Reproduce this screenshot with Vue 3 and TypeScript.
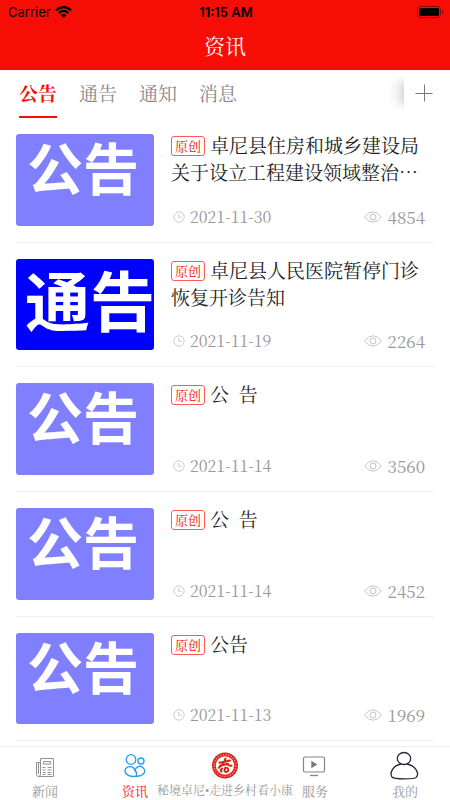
<script setup lang="ts">
import { ref } from 'vue'

interface Article {
  id: number
  cover: string
  kind: 'light' | 'deep'
  title: string
  date: string
  views: number
}

const tabs: string[] = ['公告', '通告', '通知', '消息']
const activeTab = ref('公告')

const articles: Article[] = [
  { id: 1, cover: '公告', kind: 'light', title: '卓尼县住房和城乡建设局关于设立工程建设领域整治⋯', date: '2021-11-30', views: 4854 },
  { id: 2, cover: '通告', kind: 'deep', title: '卓尼县人民医院暂停门诊恢复开诊告知', date: '2021-11-19', views: 2264 },
  { id: 3, cover: '公告', kind: 'light', title: '公\u00a0\u00a0告', date: '2021-11-14', views: 3560 },
  { id: 4, cover: '公告', kind: 'light', title: '公\u00a0\u00a0告', date: '2021-11-14', views: 2452 },
  { id: 5, cover: '公告', kind: 'light', title: '公告', date: '2021-11-13', views: 1969 },
]
</script>

<template>
  <div class="app">
    <header class="header">
      <div class="status">
        <div class="carrier">
          <span>Carrier</span>
          <svg width="17" height="12" viewBox="0 0 17 12" fill="none" stroke="#000" stroke-width="2.2">
            <path d="M1 4.3Q8.500-2.200 16 4.300" />
            <path d="M3.700 7.100Q8.500 2.800 13.300 7.100" />
            <path d="M8.500 12L5.700 9.100Q8.500 6.900 11.300 9.100Z" fill="#000" stroke="none" />
          </svg>
        </div>
        <span class="time">11:15 AM</span>
        <svg class="battery" width="27" height="12" viewBox="0 0 27 12">
          <rect x=".5" y=".5" width="23" height="11" rx="3" fill="none" stroke="#8d0804" />
          <rect x="2" y="2" width="20" height="8" rx="1.500" fill="#000" />
          <path d="M25 4v4q1.500-.5 1.500-2T25 4Z" fill="#8d0804" />
        </svg>
      </div>
      <h1>资讯</h1>
    </header>

    <div class="tabbar">
      <div class="tabs" role="tablist">
        <button
          v-for="tab in tabs"
          :key="tab"
          type="button"
          role="tab"
          class="tab"
          :class="{ active: tab === activeTab }"
          :aria-selected="tab === activeTab"
          @click="activeTab = tab"
        >{{ tab }}</button>
      </div>
      <span class="shade"></span>
      <button type="button" class="add" aria-label="添加">
        <svg width="18" height="18" viewBox="0 0 18 18" stroke="#777" fill="none">
          <path d="M.5 9.500h17M9.500 .5v17" />
        </svg>
      </button>
    </div>

    <main class="list">
      <article v-for="item in articles" :key="item.id" class="item">
        <div class="cover" :class="item.kind"><span>{{ item.cover }}</span></div>
        <div class="body">
          <h2><span class="tag">原创</span><span>{{ item.title }}</span></h2>
          <div class="meta">
            <svg width="12" height="12" viewBox="0 0 12 12" fill="none" stroke="#ccc">
              <circle cx="6" cy="6" r="5.200" />
              <path d="M5.700 3v3.300h3" />
            </svg>
            <time>{{ item.date }}</time>
            <svg width="18" height="12" viewBox="0 0 18 12" fill="none" stroke="#c4c4c4">
              <path d="M.6 6Q4.500 .8 9 .8T17.400 6Q13.500 11.200 9 11.200T.6 6Z" />
              <circle cx="9" cy="6" r="3" />
            </svg>
            <span class="views">{{ item.views }}</span>
          </div>
        </div>
      </article>
    </main>

    <nav class="nav">
      <a href="#news">
        <svg width="32" height="30" viewBox="0 0 32 30" fill="none" stroke="#929292">
          <path d="M11.500 7.500h13v18h-15q-2 0-2-2v-12h4" />
          <path d="M11.500 7.500v15.500q0 2.500-2 2.500M9.500 12v11" />
          <path d="M14.500 10.500h7v2.500h-7zM13.500 16.500h3m2 0h4m-9 2.500h3m2 0h4m-9 2.500h3m2 0h4m-9 2h3m2 0h4" />
        </svg>
        <span>新闻</span>
      </a>
      <a href="#info" class="current">
        <svg width="32" height="30" viewBox="0 0 32 30" fill="none" stroke="#269bea" stroke-width="1.300">
          <circle cx="12" cy="8.500" r="4.800" />
          <circle cx="22" cy="10" r="3" />
          <path d="M17 25.200C11.500 26.500 6 23.300 6 20.300C6 15.300 13.800 13.200 16 19.300C17 15.200 21 14.300 23.500 16.300C29.500 21.300 22.500 25.700 17 25.200ZM16 19.300Q18.500 21.800 17 25.200" />
        </svg>
        <span>资讯</span>
      </a>
      <a href="#home" class="wide">
        <svg width="32" height="30" viewBox="0 0 32 30">
          <circle cx="16" cy="14.500" r="13" fill="#db2118" />
          <circle cx="16" cy="14.500" r="10.900" fill="none" stroke="#ee8a83" stroke-width="1.300" stroke-dasharray="1.500 1.200" />
          <circle cx="16" cy="14.500" r="9.200" fill="#fff" />
          <path d="M10.500 11.800L21 9.500M16.500 7.500Q15.500 12.500 9.800 16.800M11 14.800L19 12.700M17.500 12.800Q20 15.200 22.500 14.500M13 17.500Q10.800 20 12.500 20.500M16.500 16.500Q14 21.500 18 20.800Q20.800 19.500 18.300 17" fill="none" stroke="#db2118" stroke-width="2" stroke-linecap="round" />
        </svg>
        <span>秘境卓尼•走进乡村看小康</span>
      </a>
      <a href="#service">
        <svg width="32" height="30" viewBox="0 0 32 30" fill="none" stroke="#858585" stroke-width="1.200">
          <rect x="4.500" y="6" width="21" height="15" rx="1.500" />
          <path d="M12.300 9.700v7.500l6-3.700Z" fill="#777" stroke="none" />
          <path d="M11 24.500h8" stroke-width="1.300" />
        </svg>
        <span>服务</span>
      </a>
      <a href="#mine">
        <svg width="32" height="30" viewBox="0 0 32 30" fill="none" stroke="#2b2838" stroke-width="1.300">
          <path d="M12.300 13C3.500 14.300 .5 22.500 3 26Q4.500 27.900 15.500 27.900T27.500 26C30.500 22.500 26.500 14.300 17.700 13" />
          <ellipse cx="15" cy="7.500" rx="6.700" ry="6" />
        </svg>
        <span>我的</span>
      </a>
    </nav>
  </div>
</template>

<style>
body {
  margin: 0;
  background: #fff;
}
</style>

<style scoped>
.app {
  display: flex;
  flex-direction: column;
  height: 100vh;
  overflow: hidden;
  color: #222;
  font-family: "Noto Serif CJK SC", "Noto Sans CJK SC", serif;
}

button {
  padding: 0;
  border: 0;
  background: none;
  font-family: inherit;
  cursor: pointer;
}

svg {
  display: block;
  flex: none;
}

.header {
  flex: none;
  height: 70px;
  background: #f60e06;
}

.status {
  display: grid;
  grid-template-columns: 1fr auto 1fr;
  align-items: center;
  height: 24px;
  padding: 0 6px 0 8px;
  color: #000;
  font: 13px/24px Inter, sans-serif;
}

.carrier {
  display: flex;
  align-items: center;
  gap: 4px;
}

.time {
  font-weight: 600;
}

.battery {
  justify-self: end;
}

h1 {
  margin: 0;
  color: #fff;
  font-size: 21px;
  font-weight: 400;
  line-height: 42px;
  text-align: center;
}

.tabbar {
  display: flex;
  flex: none;
  align-items: stretch;
  height: 48px;
}

.tabs {
  display: flex;
  flex: 1;
  gap: 22px;
  padding-left: 19px;
}

.tab {
  border-bottom: 2px solid transparent;
  color: #888;
  font-size: 19px;
  line-height: 46px;
}

.tab.active {
  border-color: #f60e06;
  color: #f60e06;
  font-weight: 700;
}

.shade {
  width: 16px;
  margin: 5px 0 7px;
  background: linear-gradient(to left, #dcdcdc, #f4f4f4 50%, #fff);
  mask-image: linear-gradient(transparent, #000 35%, #000 65%, transparent);
}

.add {
  display: flex;
  justify-content: center;
  width: 46px;
  padding: 14px 7px 0 0;
}

.list {
  flex: 1;
  min-height: 0;
  padding: 0 16px;
  overflow-y: auto;
  scrollbar-width: none;
}

.item {
  display: flex;
  gap: 17px;
  padding: 16px 0;
  border-bottom: 1px solid #eee;
}

.cover {
  display: flex;
  flex: none;
  box-sizing: border-box;
  width: 33%;
  aspect-ratio: 301 / 200;
  border-radius: 3px;
  color: #fff;
  font-family: "Noto Sans CJK SC", sans-serif;
  font-weight: 700;
  white-space: nowrap;
}

.light {
  padding-left: 11px;
  background: #8080ff;
  font-size: 56px;
  line-height: 64px;
}

.deep {
  padding-left: 9px;
  background: #0000fe;
  font-size: 65px;
  line-height: 78px;
}

.body {
  display: flex;
  flex: 1;
  flex-direction: column;
  justify-content: space-between;
  min-width: 0;
}

h2 {
  margin: -3px 0 0;
  font-size: 19px;
  font-weight: 400;
  line-height: 27px;
}

.tag {
  display: inline-block;
  margin-right: 5px;
  padding: 0 3px;
  border: 1px solid #ff5a55;
  border-radius: 3px;
  color: #f60e06;
  font-size: 13px;
  line-height: 18px;
  vertical-align: 2px;
}

.meta {
  display: flex;
  align-items: center;
  padding: 0 9px 0 2px;
  color: #999;
  font-size: 16px;
  line-height: 18px;
}

time {
  flex: 1;
  margin-left: 5px;
}

.views {
  margin-left: 6px;
  font-size: 17px;
}

.nav {
  display: flex;
  flex: none;
  height: 53px;
  border-top: 1px solid #eee;
  background: #fff;
}

.nav a {
  display: flex;
  flex: 1 1 0;
  flex-direction: column;
  align-items: center;
  gap: 3px;
  min-width: 0;
  padding-top: 4px;
  color: #999;
  font-size: 13px;
  line-height: 14px;
  text-decoration: none;
  white-space: nowrap;
}

.nav .current {
  color: #f60e06;
}

.nav .wide {
  font-family: "Liberation Serif", "Noto Serif CJK SC", serif;
  font-size: 12px;
}
</style>
